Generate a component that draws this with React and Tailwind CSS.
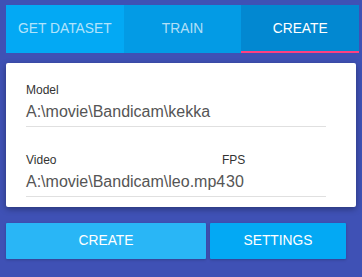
import { useState } from "react";

const tabs = ["GET DATASET", "TRAIN", "CREATE"];
const tabColors = ["bg-[#03a9f4]", "bg-[#039be5]", "bg-[#0288d1]"];

function Field({ label, value, className, labelClass = "" }) {
    return (
        <div className={`flex flex-col ${className}`}>
            <label className={`text-[12px] leading-[16px] text-[#333] ${labelClass}`}>{label}</label>
            <div className="text-[16px] leading-[24px] text-[#555] mt-[2px] pb-[2px]">{value}</div>
        </div>
    );
}

export default function App() {
    const [active, setActive] = useState(2);

    return (
        <div
            className="w-[362px] h-[277px] bg-[#3f51b5] pl-[6px] pt-[5px]"
            style={{ fontFamily: '"Liberation Sans", Arial, sans-serif' }}
        >
            {/* Tabs */}
            <div className="flex w-[353px] h-[48px]">
                {tabs.map((t, i) => (
                    <button
                        key={t}
                        onClick={() => setActive(i)}
                        className={`relative flex-1 flex items-center justify-center text-[13.8px] ${tabColors[i]} ${
                            active === i ? "text-white" : "text-white/70"
                        }`}
                    >
                        {t}
                        {active === i && (
                            <span className="absolute left-0 right-0 bottom-0 h-[2px] bg-[#ff4081]" />
                        )}
                    </button>
                ))}
            </div>

            {/* Card */}
            <div className="mt-[10px] w-[350px] h-[144px] bg-white rounded-[2px] shadow-[0_2px_6px_rgba(0,0,0,0.35)] pl-[20px] pr-[30px] pt-[19px]">
                <Field label="Model" value="A:\movie\Bandicam\kekka" className="border-b border-[#e0e0e0]" />
                <div className="flex mt-[25px] border-b border-[#e0e0e0]">
                    <Field label="Video" value="A:\movie\Bandicam\leo.mp4" className="w-[200px]" />
                    <Field label="FPS" value="30" className="flex-1" labelClass="-ml-[4px]" />
                </div>
            </div>

            {/* Buttons */}
            <div className="flex gap-[4px] mt-[16px]">
                <button className="w-[200px] h-[36px] bg-[#29b6f6] text-white text-[13.8px] rounded-[1px] shadow-[0_1px_3px_rgba(0,0,0,0.2)]">
                    CREATE
                </button>
                <button className="w-[136px] h-[36px] bg-[#03a9f4] text-white text-[13.8px] rounded-[1px] shadow-[0_1px_3px_rgba(0,0,0,0.2)]">
                    SETTINGS
                </button>
            </div>
        </div>
    );
}
